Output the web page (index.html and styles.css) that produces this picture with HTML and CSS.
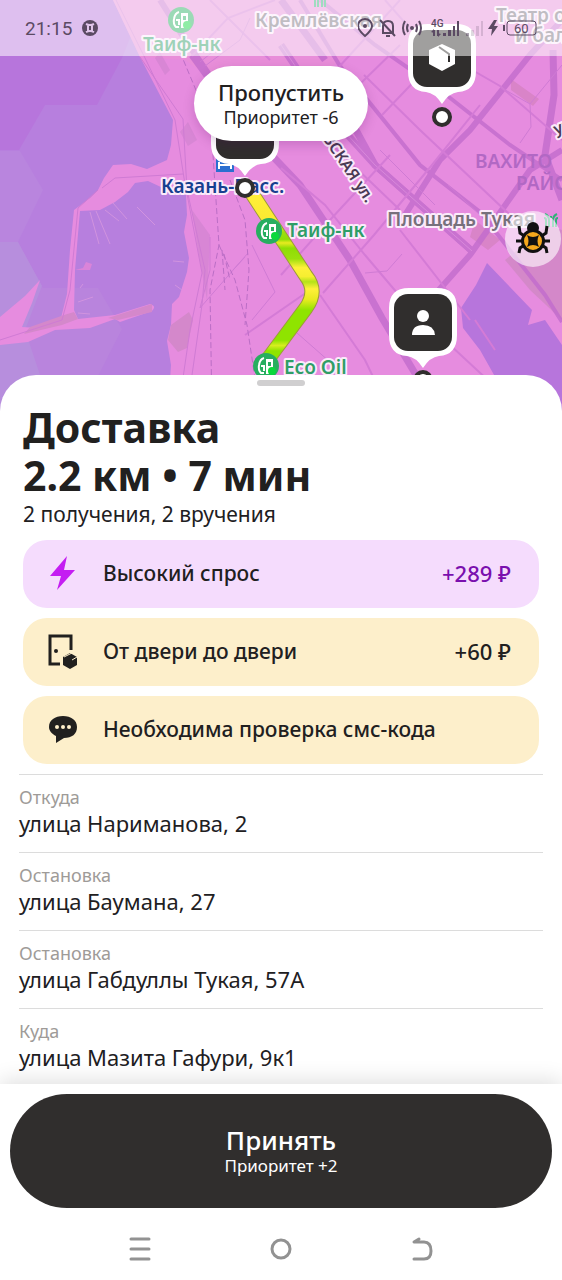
FILE: index.html
```html
<!DOCTYPE html>
<html lang="ru">
<head>
    <meta charset="UTF-8">
    <meta name="viewport" content="width=device-width, initial-scale=1.0">
    <title>Доставка</title>
    <link rel="stylesheet" href="styles.css">
</head>
<body>
    <div class="screen">
        <header class="map">
            <svg class="map-canvas" viewBox="0 0 562 412" preserveAspectRatio="xMidYMin slice">
                <defs>
                    <linearGradient id="route" gradientUnits="userSpaceOnUse" x1="0" y1="188" x2="0" y2="365">
                        <stop offset="0" stop-color="#fff03a"/>
                        <stop offset=".2" stop-color="#fbe930"/>
                        <stop offset=".25" stop-color="#9be00c"/>
                        <stop offset=".29" stop-color="#8fdd05"/>
                        <stop offset=".31" stop-color="#e9ea20"/>
                        <stop offset=".34" stop-color="#8fdd05"/>
                        <stop offset=".4" stop-color="#9be00c"/>
                        <stop offset=".45" stop-color="#fff03a"/>
                        <stop offset=".5" stop-color="#f6ee30"/>
                        <stop offset=".53" stop-color="#b4e218"/>
                        <stop offset=".57" stop-color="#fff03a"/>
                        <stop offset=".63" stop-color="#e9ea20"/>
                        <stop offset=".69" stop-color="#8fe400"/>
                        <stop offset=".86" stop-color="#8fe400"/>
                        <stop offset=".89" stop-color="#d6ee20"/>
                        <stop offset=".92" stop-color="#8fe400"/>
                    </linearGradient>
                    <g id="fuel">
                        <circle r="13" fill="#27ae60"/>
                        <path d="M0-7H7V2H4V8H0Z" fill="#fff"/>
                        <path d="M2-4H5V0H2Z" fill="#27ae60"/>
                        <path d="M-2 7H-5Q-8 4-7-1Q-6-7-2-8M-5 0H-2V5" fill="none" stroke="#fff" stroke-width="2"/>
                        <circle cx="6" cy="5" r="4" fill="#0bd83c"/>
                    </g>
                    <g id="pin">
                        <path d="M-14-69H14Q34-69 34-49V-22Q34-2 16-1Q7 0 0 11Q-7 0-16-1Q-34-2-34-22V-49Q-34-69-14-69Z" fill="#fff"/>
                        <rect x="-29" y="-63" width="58" height="57" rx="14" fill="#302e2d"/>
                    </g>
                    <circle id="stop" r="8" fill="#fff" stroke="#302e2d" stroke-width="4"/>
                    <g id="metro" fill="none" stroke-width="2">
                        <path d="M-5 7V0Q-5-2-7-2M-2 7V0Q-2-4-6-6M5 7V0Q5-2 7-2M2 7V0Q2-4 6-6M0-2V-4"/>
                    </g>
                </defs>

                <!-- water -->
                <rect width="562" height="412" fill="#b77fde"/>
                <path d="M0 0H145L122 58L97 105H45L19 150H0Z" fill="#b775dc"/>
                <path d="M0 151H20L43 190L18 242L0 242Z" fill="#b985de"/>
                <path d="M0 242H18L43 288H98L122 329L98 376L122 412H0Z" fill="#b984dd"/>
                <path d="M0 242H18L42 286L25 330L40 375L0 412Z" fill="#b78edd"/>

                <!-- land -->
                <path d="M113 0L140 57L173 120L171 145L167 160L147 169L131 164L113 165L104 178L98 190L90 198L74 210L70 250L67 294L60 322L38 328L22 327L32 303L40 280L25 296L0 317V345L28 342L55 330L90 328L115 319L120 322L152 311Q157 306 150 304L115 315L78 319L74 310L75 270L79 222L80 211L100 210L115 202L128 192L135 183L148 181L163 188L186 195L187 215L184 232L189 258L187 272L179 297L172 304L171 325L167 341L171 365L168 412H562V0Z" fill="#e68cdf"/>
                <path d="M113 0H562V56H345L270 120L185 60L140 57Z" fill="#ea90d6" opacity=".6"/>
                <path d="M189 312L171 325L168 340L178 352L187 348L193 320ZM78 319L62 325L24 334L30 327L64 315L74 312ZM108 318L152 304V312L118 320Z" fill="#d488cb"/>
                <path d="M548 225L562 230V320L530 290L505 260Z" fill="#d488c9"/>
                <path d="M511 79L539 99L533 106L511 90ZM475 220L500 240L488 250L470 237Z" fill="#d984c8"/>
                <path d="M160 52L170 70L165 75L155 58ZM188 122L197 140L188 146L180 132ZM192 210L210 235L207 300L198 250Z" fill="#cf82cf" opacity=".6"/>
                <path d="M487 263L532 310L528 325L545 320L562 345V412H515L480 350L463 328L461 308L476 285Z" fill="#b775dc"/>
                <path d="M75 270L83 268L86 262L92 264L90 270L83 270" fill="#da84d9"/>
                <g fill="none" stroke="#d193df" stroke-width="1">
                    <path d="M90 212L99 244M96 211L110 244M105 210L119 221M113 203L127 219M137 207L155 225M173 261L184 262M175 285L182 290M78 302L93 297M78 313L90 314M80 288L83 284"/>
                </g>

                <!-- streets -->
                <g fill="none" stroke="#c26ccd" opacity=".8">
                    <path d="M300 0L340 66L420 165L480 212L545 295L562 322" stroke-width="4"/>
                    <path d="M562 20L530 55L470 130L440 160L405 215M562 150L530 170L470 255L430 300" stroke-width="6"/>
                    <path d="M192 55L243 125L300 185L350 260L382 318L422 385" stroke-width="7"/>
                    <path d="M281 0L325 60M345 110L375 165L428 212L472 251" stroke-width="7"/>
                    <path d="M281 45L325 110L375 165L428 212L472 251" stroke-width="7"/>
                    <path d="M281 45L325 110L375 165L428 212L472 251" stroke="#d688da" stroke-width="1"/>
                    <path d="M320 0L375 45L440 90L510 145L562 180" stroke-width="4"/>
                    <path d="M553 50L554 95L545 155L562 200" stroke-width="7"/>
                    <path d="M160 0L184 38L218 88L245 128" stroke-width="6"/>
                </g>
                <g fill="none" stroke="#d47bd6" stroke-width="2">
                    <path d="M192 56L228 18L275 0M338 68L381 21L400 0M361 83L400 45M382 115L425 70M323 293L374 235L432 165L480 105M281 168L325 205L365 255L420 320L445 345"/>
                    <path d="M320 295L365 360L390 412M245 335L310 290M364 75L420 130L510 215M385 0L420 40L500 86L562 140M450 345L520 410M475 320L495 350"/>
                    <path d="M265 85L330 143L400 210M281 275L330 220L390 155M210 0L270 60M400 230L470 320"/>
                </g>
                <g fill="none" stroke="#cf7bd4" stroke-width="1">
                    <path d="M116 0L145 58L175 120L184 178L202 273L190 330L178 412M140 57L183 119L187 190L205 270L202 305L192 375M102 188L115 178L183 174M98 190L78 208L70 290L62 320L0 340"/>
                    <path d="M210 237V270L200 308L248 253M252 245L275 292L252 320M233 270L245 257M365 273L387 271L402 254M297 333L330 362L345 390"/>
                    <path d="M500 87L530 104L531 127L520 143M530 104L562 65M448 185L480 215M380 150L435 205M205 66L240 40L250 18M200 62L215 50"/>
                </g>
                <g fill="none" stroke="#bb6ec6" stroke-width="1" stroke-dasharray="6 3">
                    <path d="M180 52L198 95L212 140L219 245L210 290L212 412M230 180L245 220L249 270L245 325M219 245L235 280L247 325L256 385M222 250L225 290M224 254L230 280"/>
                </g>

                <!-- place labels -->
                <g class="label label-area">
                    <text x="475" y="168">ВАХИТО</text>
                    <text x="516" y="190">РАЙО</text>
                </g>
                <g class="label label-grey">
                    <text x="255" y="27">Кремлёвская</text>
                    <text x="387" y="226">Площадь Тукая</text>
                    <text x="496" y="22">Театр о</text>
                    <text x="515" y="42">и бал</text>
                </g>
                <g class="label label-street">
                    <text transform="translate(322 138) rotate(56)">ВСКАЯ ул.</text>
                    <text transform="translate(556 135) rotate(-22)">ул</text>
                </g>
                <g class="label label-green">
                    <text x="143" y="51">Таиф-нк</text>
                    <text x="287" y="237">Таиф-нк</text>
                    <text x="284" y="374">Eco Oil</text>
                </g>
                <use href="#metro" x="320" y="0" stroke="#2fb277"/>
                <use href="#metro" x="551" y="220" stroke="#2fb277"/>
                <path d="M216 158H234V172H216Z" fill="#2b6fd0"/>
                <path d="M219 162V169M219 165H231V169" stroke="#fff" stroke-width="2" fill="none"/>

                <!-- route -->
                <path d="M249 189L306 276Q318 291 306 308L262 367" fill="none" stroke="#9c9a3a" stroke-width="15" stroke-linejoin="round"/>
                <path d="M249 189L306 276Q318 291 306 308L262 367" fill="none" stroke="url(#route)" stroke-width="13"/>
                <use href="#fuel" x="181" y="20"/>
                <use href="#fuel" x="269" y="231"/>
                <use href="#fuel" x="266" y="366"/>
                <g class="label label-station"><text x="161" y="193">Казань-Пасс.</text></g>

                <!-- markers -->
                <use href="#pin" x="245" y="165"/>
                <use href="#stop" x="245" y="188"/>
                <use href="#pin" x="442" y="93"/>
                <path d="M442 44L455 50V64L442 71L429 64V50Z" fill="#fff"/>
                <path d="M439 47L449 54V62" fill="none" stroke="#302e2d" stroke-width="2"/>
                <use href="#stop" x="442" y="117"/>
                <use href="#pin" x="423" y="357"/>
                <circle cx="423" cy="316" r="6" fill="#fff"/>
                <path d="M412 335Q412 325 423 325T435 335Z" fill="#fff"/>
                <use href="#stop" x="423" y="380"/>
            </svg>

            <div class="status-bar">
                <span class="clock">21:15</span>
                <svg class="status-app" viewBox="0 0 16 16"><circle cx="8" cy="8" r="8"/><path d="M4 4Q8 6 12 4M4 12Q8 10 12 12M6 5V11M10 5V11"/></svg>
                <svg class="status-icons" viewBox="0 0 182 28">
                    <g fill="none" stroke="currentColor" stroke-width="2">
                        <path d="M7 22Q0 16 0 12A7 7 0 0 1 14 12Q14 16 7 22Z"/>
                        <path d="M24 19H35V12Q35 7 30 7Q25 7 25 12V19M22 6L37 22M28 22H32"/>
                        <path d="M50 10Q48 14 50 18M47 7Q43 14 47 21M58 10Q60 14 58 18M61 7Q65 14 61 21"/>
                    </g>
                    <rect x="149" y="7" width="29" height="14" rx="3" fill="none" stroke="currentColor"/>
                    <circle cx="7" cy="12" r="2" fill="currentColor"/>
                    <circle cx="54" cy="14" r="2" fill="currentColor"/>
                    <path d="M85 19h3v3h-3zM90 16h3v6h-3zM95 12h2v10h-2zM99 7h2v15h-2zM75 16h2v6h-2zM79 16h2v6h-2zM73 18l3-3v4zM83 20l-3 3v-4z" fill="currentColor"/>
                    <path d="M108 19h3v3h-3z" fill="currentColor" opacity=".5"/>
                    <path d="M113 16h3v6h-3zM118 12h3v10h-3zM123 7h2v15h-2z" fill="currentColor" opacity=".2"/>
                    <path d="M136 6L130 15H134L133 22L140 12H136L139 6ZM145 11h2v6h-2z" fill="currentColor"/>
                    <text class="network" x="73" y="13">4G</text>
                    <text class="charge" x="156" y="19">60</text>
                </svg>
            </div>

            <button class="skip" type="button">
                <span class="skip-title">Пропустить</span>
                <span class="skip-note">Приоритет -6</span>
            </button>

            <button class="bug" type="button" aria-label="Сообщить об ошибке">
                <svg viewBox="0 0 36 36">
                    <path d="M4 5L5 12L11 16M32 5L31 12L25 16M1 20H9M35 20H27M4 32L5 27L11 23M32 32L31 27L25 23" fill="none" stroke="#111" stroke-width="3"/>
                    <circle cx="18" cy="7" r="6" fill="#111"/>
                    <circle cx="18" cy="20" r="12" fill="#111"/>
                    <circle cx="18" cy="20" r="9" fill="#f5a81c"/>
                    <path d="M12 14Q18 18 24 14Q21 20 24 26Q18 22 12 26Q15 20 12 14Z" fill="#111"/>
                </svg>
            </button>
        </header>

        <main class="sheet">
            <div class="handle"></div>
            <h1>Доставка<br>2.2 км • 7 мин</h1>
            <p class="summary">2 получения, 2 вручения</p>

            <ul class="tags">
                <li class="tag tag-demand">
                    <svg viewBox="0 0 32 36"><path d="M20 1L3 21H14L10 35L28 15H17Z" fill="#c41df2"/></svg>
                    <span>Высокий спрос</span>
                    <span class="price">+289 ₽</span>
                </li>
                <li class="tag">
                    <svg viewBox="0 0 32 36">
                        <path d="M13 31H3V3H24V17" fill="none" stroke="#21201f" stroke-width="3"/>
                        <circle cx="9" cy="18" r="2" fill="#21201f"/>
                        <path d="M23 20L30 24V32L23 36L16 32V24Z" fill="#21201f"/>
                        <path d="M17 24L25 20M25 27L30 24" stroke="#fff0cc" stroke-width="1"/>
                    </svg>
                    <span>От двери до двери</span>
                    <span class="price">+60 ₽</span>
                </li>
                <li class="tag">
                    <svg viewBox="0 0 32 36">
                        <path d="M16 5C8 5 2 9 2 16C2 20 5 23 9 25V32L17 27C25 27 30 23 30 16C30 9 24 5 16 5Z" fill="#21201f"/>
                        <g fill="#fff0cc"><circle cx="10" cy="16" r="2"/><circle cx="16" cy="16" r="2"/><circle cx="22" cy="16" r="2"/></g>
                    </svg>
                    <span>Необходима проверка смс-кода</span>
                </li>
            </ul>

            <dl class="stops">
                <div class="stop">
                    <dt>Откуда</dt>
                    <dd>улица Нариманова, 2</dd>
                </div>
                <div class="stop">
                    <dt>Остановка</dt>
                    <dd>улица Баумана, 27</dd>
                </div>
                <div class="stop">
                    <dt>Остановка</dt>
                    <dd>улица Габдуллы Тукая, 57А</dd>
                </div>
                <div class="stop">
                    <dt>Куда</dt>
                    <dd>улица Мазита Гафури, 9к1</dd>
                </div>
            </dl>
        </main>

        <footer class="actions">
            <button class="accept" type="button">
                <span class="accept-title">Принять</span>
                <span class="accept-note">Приоритет +2</span>
            </button>
            <nav class="system-nav">
                <button type="button" aria-label="Недавние"><svg viewBox="0 0 24 26"><path d="M3 3H21M3 13H21M3 23H21"/></svg></button>
                <button type="button" aria-label="Домой"><svg viewBox="0 0 24 26"><circle cx="12" cy="13" r="9"/></svg></button>
                <button type="button" aria-label="Назад"><svg viewBox="0 0 24 26"><path d="M9 3L4 6H14Q21 6 21 15Q21 23 14 23H4"/></svg></button>
            </nav>
        </footer>
    </div>
</body>
</html>
```

FILE: styles.css
```css
* {
    box-sizing: border-box;
}
body {
    margin: 0;
    font-family: "Noto Sans", sans-serif;
    color: #21201f;
    background: #fff;
}
button {
    font-family: inherit;
    border: none;
    padding: 0;
    cursor: pointer;
}
.screen {
    display: flex;
    flex-direction: column;
    min-height: 100vh;
}

/* map */
.map {
    position: relative;
    overflow: hidden;
}
.map-canvas {
    display: block;
    width: 100%;
    height: 412px;
}
.label {
    font-size: 19px;
    font-weight: 600;
    paint-order: stroke;
    stroke: #fbeafa;
    stroke-width: 4px;
    stroke-linejoin: round;
}
.label-grey {
    fill: #77707c;
}
.label-green {
    fill: #2f9e67;
}
.label-station {
    fill: #17408f;
}
.label-street {
    fill: #4a3a55;
    font-size: 16px;
}
.label-area {
    fill: #b268c4;
    stroke: none;
}
.status-bar {
    position: absolute;
    top: 0;
    left: 0;
    right: 0;
    height: 56px;
    padding: 0 22px 0 25px;
    display: flex;
    align-items: center;
    gap: 10px;
    color: #5b4a63;
    background: rgba(255, 255, 255, 0.54);
}
.clock {
    font-family: Roboto, sans-serif;
    font-size: 19px;
}
.status-app {
    width: 16px;
    height: 16px;
    fill: currentColor;
}
.status-app path {
    fill: none;
    stroke: #e0c4ea;
    stroke-width: 2;
}
.status-icons {
    width: 182px;
    height: 28px;
    margin-left: auto;
}
.network, .charge {
    font-family: Roboto, sans-serif;
    fill: currentColor;
}
.network {
    font-size: 10px;
    font-weight: 500;
}
.charge {
    font-size: 13px;
}
.skip {
    position: absolute;
    top: 66px;
    left: 50%;
    transform: translateX(-50%);
    display: flex;
    flex-direction: column;
    align-items: center;
    padding: 12px 24px;
    border-radius: 38px;
    color: #21201f;
    background: #fff;
    box-shadow: 0 4px 12px rgba(80, 0, 90, 0.2);
}
.skip-title {
    font-size: 22px;
    font-weight: 500;
    line-height: 28px;
}
.skip-note {
    font-size: 18px;
    line-height: 23px;
}
.bug {
    position: absolute;
    top: 211px;
    right: 1px;
    width: 56px;
    height: 56px;
    display: grid;
    place-items: center;
    border-radius: 50%;
    background: rgba(255, 255, 255, 0.6);
}
.bug svg {
    width: 36px;
    height: 36px;
}

/* order sheet */
.sheet {
    position: relative;
    flex: 1;
    margin-top: -37px;
    padding: 5px 19px 0;
    border-radius: 36px 36px 0 0;
    background: #fff;
}
.handle {
    width: 48px;
    height: 6px;
    margin: 0 auto 17px;
    border-radius: 3px;
    background: #d0cfd0;
}
h1 {
    margin: 0 4px;
    font-size: 41px;
    font-weight: 700;
    line-height: 48px;
}
.summary {
    margin: 0 4px 11px;
    font-size: 21px;
    line-height: 30px;
}
.tags {
    display: flex;
    flex-direction: column;
    gap: 10px;
    margin: 0 4px 10px;
    padding: 0;
    list-style: none;
}
.tag {
    display: flex;
    align-items: center;
    gap: 24px;
    height: 68px;
    padding: 0 28px 2px 24px;
    border-radius: 24px;
    font-size: 21px;
    font-weight: 500;
    background: #fdefcb;
}
.tag svg {
    flex: none;
    width: 32px;
    height: 36px;
}
.tag-demand {
    background: #f5dcfd;
}
.price {
    margin-left: auto;
    font-size: 22px;
}
.tag-demand .price {
    color: #7a0fae;
}
.stops {
    margin: 0;
}
.stop {
    padding: 10px 0 15px;
    border-top: 1px solid #dcdcdc;
}
.stop:last-child {
    padding-bottom: 13px;
}
.stop dt {
    font-size: 18px;
    line-height: 24px;
    color: #9e9b98;
}
.stop dd {
    margin: 0;
    font-size: 22px;
    line-height: 28px;
}

/* bottom actions */
.actions {
    position: relative;
    padding: 10px 10px 18px;
    background: #fff;
    box-shadow: 0 -4px 20px rgba(0, 0, 0, 0.12);
}
.accept {
    display: flex;
    flex-direction: column;
    align-items: center;
    justify-content: center;
    width: 100%;
    height: 114px;
    border-radius: 57px;
    color: #fff;
    background: #302e2d;
}
.accept-title {
    font-size: 26px;
    font-weight: 500;
    line-height: 30px;
}
.accept-note {
    font-size: 17px;
    line-height: 22px;
}
.system-nav {
    display: flex;
    justify-content: space-around;
    padding: 28px 60px 0;
}
.system-nav button {
    background: none;
}
.system-nav svg {
    display: block;
    width: 24px;
    height: 26px;
    fill: none;
    stroke: #929292;
    stroke-width: 3;
    stroke-linecap: round;
    stroke-linejoin: round;
}
```
